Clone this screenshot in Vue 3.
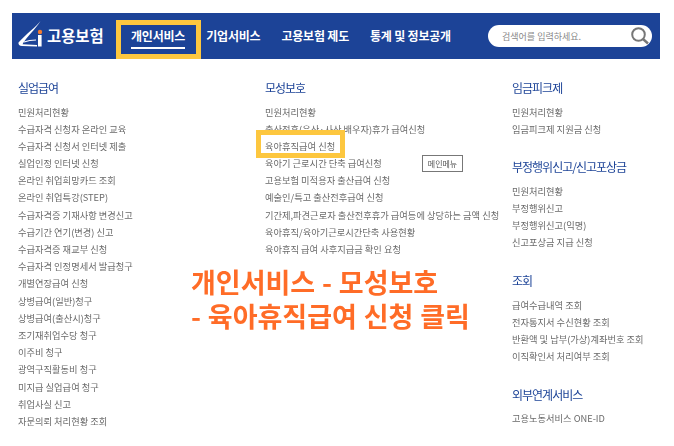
<template>
  <div class="page">
    <header class="top">
      <div class="logo">
        <svg width="28" height="28" viewBox="0 0 28 28">
          <path d="M24.5 2 C20 8 10 15 2.5 23.5 C2 25.5 3.5 26.8 6 27 L21 27.5 L21 26 L6.5 25.2 C11 17 19 11 24.5 2 Z" fill="#fff" />
          <path d="M8 23 C12 21.5 16 21 20 21" fill="none" stroke="#fff" stroke-width="1.2" />
          <rect x="22" y="16" width="3.6" height="11.5" fill="#fff" />
          <circle cx="24" cy="13" r="2.2" fill="#f47b30" />
        </svg>
        <span>고용보험</span>
      </div>
      <nav class="nav">
        <a v-for="item in navItems" :key="item" class="nav-item" :class="{ active: item === '개인서비스' }">
          {{ item }}
          <i v-if="item === '개인서비스'" class="nav-mark"></i>
        </a>
      </nav>
      <div class="search">
        <span>검색어를 입력하세요.</span>
        <svg width="20" height="20" viewBox="0 0 20 20">
          <circle cx="8.5" cy="8.5" r="6.3" fill="none" stroke="#777" stroke-width="2" />
          <path d="M13 13 L18 17.5" stroke="#777" stroke-width="2.4" />
        </svg>
      </div>
    </header>

    <main class="columns">
      <div v-for="(col, i) in columns" :key="i" class="col">
        <section v-for="group in col" :key="group.title" class="group">
          <h2>{{ group.title }}</h2>
          <ul>
            <li v-for="row in group.rows" :key="row">
              {{ row }}
              <i v-if="row === '육아휴직급여 신청'" class="row-mark"></i>
              <span v-if="row === '육아기 근로시간 단축 급여신청'" class="tip">메인메뉴</span>
            </li>
          </ul>
        </section>
      </div>
    </main>

    <p class="note">개인서비스 - 모성보호<br />- 육아휴직급여 신청 클릭</p>
  </div>
</template>

<script setup>
const navItems = ["개인서비스", "기업서비스", "고용보험 제도", "통계 및 정보공개"];

const columns = [
  [
    {
      title: "실업급여",
      rows: [
        "민원처리현황",
        "수급자격 신청자 온라인 교육",
        "수급자격 신청서 인터넷 제출",
        "실업인정 인터넷 신청",
        "온라인 취업희망카드 조회",
        "온라인 취업특강(STEP)",
        "수급자격증 기재사항 변경신고",
        "수급기간 연기(변경) 신고",
        "수급자격증 재교부 신청",
        "수급자격 인정명세서 발급청구",
        "개별연장급여 신청",
        "상병급여(일반)청구",
        "상병급여(출산시)청구",
        "조기재취업수당 청구",
        "이주비 청구",
        "광역구직활동비 청구",
        "미지급 실업급여 청구",
        "취업사실 신고",
        "자문의뢰 처리현황 조회",
      ],
    },
  ],
  [
    {
      title: "모성보호",
      rows: [
        "민원처리현황",
        "출산전후(유산·사산 배우자)휴가 급여신청",
        "육아휴직급여 신청",
        "육아기 근로시간 단축 급여신청",
        "고용보험 미적용자 출산급여 신청",
        "예술인/특고 출산전후급여 신청",
        "기간제,파견근로자 출산전후휴가 급여등에 상당하는 금액 신청",
        "육아휴직/육아기근로시간단축 사용현황",
        "육아휴직 급여 사후지급금 확인 요청",
      ],
    },
  ],
  [
    { title: "임금피크제", rows: ["민원처리현황", "임금피크제 지원금 신청"] },
    {
      title: "부정행위신고/신고포상금",
      rows: ["민원처리현황", "부정행위신고", "부정행위신고(익명)", "신고포상금 지급 신청"],
    },
    {
      title: "조회",
      rows: [
        "급여수급내역 조회",
        "전자통지서 수신현황 조회",
        "반환액 및 납부(가상)계좌번호 조회",
        "이직확인서 처리여부 조회",
      ],
    },
    { title: "외부연계서비스", rows: ["고용노동서비스 ONE-ID"] },
  ],
];
</script>

<style>
html,
body {
  margin: 0;
  background: #fff;
  overflow: hidden;
}
</style>

<style scoped>
.page {
  position: relative;
  width: 674px;
  height: 446px;
  overflow: hidden;
  padding-top: 13px;
  box-sizing: border-box;
  font-family: "Noto Sans CJK KR", "Noto Sans", sans-serif;
  filter: blur(0.3px);
}

.top {
  display: flex;
  align-items: center;
  width: 648px;
  height: 46px;
  margin-left: 12px;
  background: #1c4397;
  color: #fff;
}

.logo {
  display: flex;
  align-items: center;
  gap: 3px;
  width: 104px;
  padding-left: 4px;
  box-sizing: border-box;
  font-size: 15.4px;
  font-weight: 700;
  flex: none;
}

.logo svg {
  margin-top: -6px;
}

.logo span {
  margin-bottom: 2px;
}

.nav {
  display: flex;
  gap: 21px;
  padding-left: 15px;
}

.nav-item {
  position: relative;
  font-size: 12px;
  font-weight: 700;
  letter-spacing: -0.2px;
  line-height: 20px;
  white-space: nowrap;
}

.nav-item.active::after {
  content: "";
  position: absolute;
  left: 0;
  right: 0;
  bottom: -3px;
  height: 2px;
  background: #fff;
}

.nav-mark {
  position: absolute;
  left: -15px;
  right: -16px;
  top: -6px;
  bottom: -13px;
  border: 5px solid #fdc73f;
}

.search {
  display: flex;
  align-items: center;
  justify-content: space-between;
  width: 164px;
  height: 22px;
  margin-left: auto;
  margin-right: 8px;
  padding: 0 2px 0 14px;
  box-sizing: border-box;
  background: #fff;
  border-radius: 11px;
  color: #888;
  font-size: 9px;
}

.columns {
  display: grid;
  grid-template-columns: 247px 247px 1fr;
  padding: 21px 0 0 18px;
}

.group + .group {
  margin-top: 21.5px;
}

h2 {
  margin: 0 0 7.5px;
  color: #1c4397;
  font-size: 12px;
  font-weight: 400;
  letter-spacing: -1px;
  line-height: 16px;
}

ul {
  margin: 0;
  padding: 0;
  list-style: none;
}

li {
  position: relative;
  height: 17.2px;
  color: #6a6a6a;
  font-size: 9.25px;
  line-height: 17.2px;
  white-space: nowrap;
}

.row-mark {
  position: absolute;
  left: -9px;
  top: -8px;
  width: 89px;
  height: 28px;
  box-sizing: border-box;
  border: 5px solid #fdc73f;
}

.tip {
  position: absolute;
  left: 157px;
  top: 0;
  width: 41px;
  height: 17px;
  box-sizing: border-box;
  border: 1px solid #777;
  background: #fff;
  color: #555;
  font-size: 8px;
  line-height: 15px;
  text-align: center;
}

.note {
  position: absolute;
  left: 191px;
  top: 265px;
  margin: 0;
  color: #ff6c27;
  font-size: 27px;
  font-weight: 700;
  line-height: 33.5px;
  word-spacing: 0.7px;
  white-space: nowrap;
}
</style>
